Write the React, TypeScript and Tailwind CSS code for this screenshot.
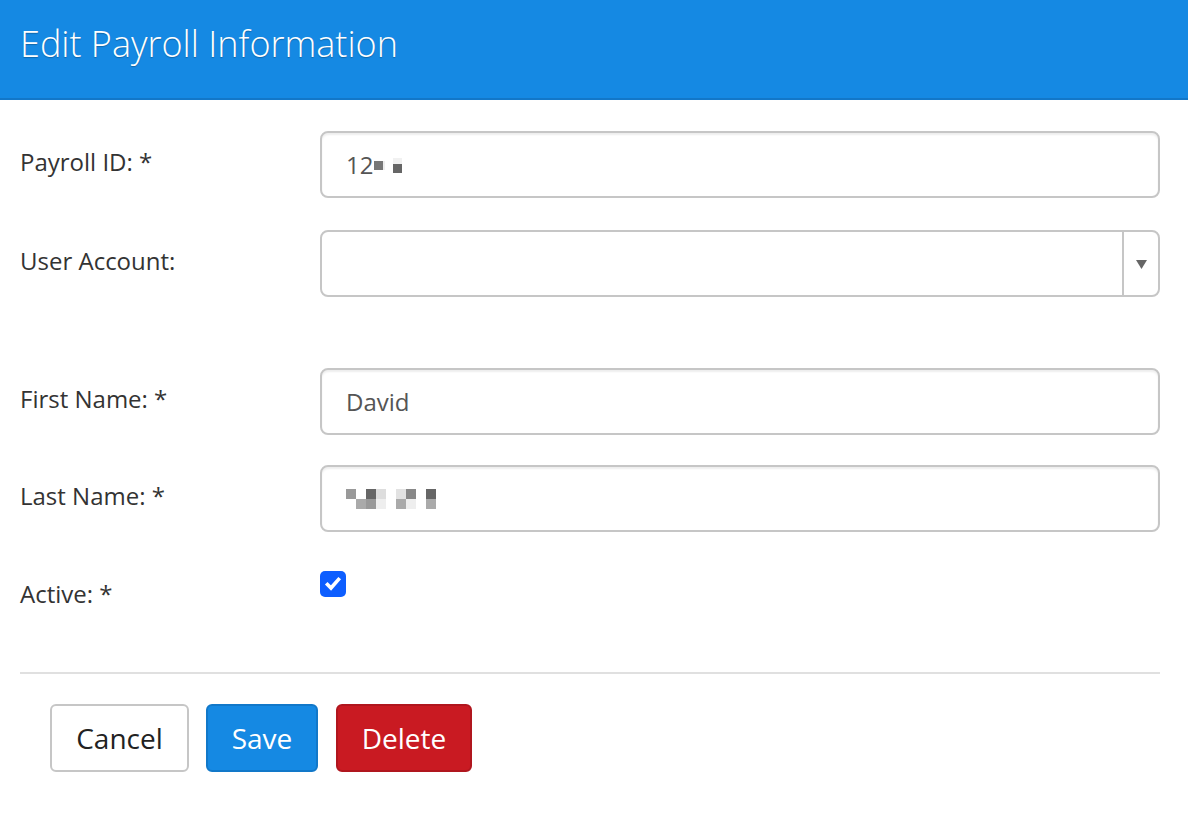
import React from "react";

const font = { fontFamily: '"Open Sans", "Noto Sans", sans-serif' };

function Px({ c, w = 9, h = 9 }: { c: string; w?: number; h?: number }) {
  return <span className="inline-block" style={{ width: w, height: h, background: c }} />;
}

function Row({ label, children, className = "" }: { label: string; children: React.ReactNode; className?: string }) {
  return (
    <div className={"flex items-center " + className}>
      <div className="w-[300px] text-[24px] text-[#333] pb-[6px]">{label}</div>
      <div className="flex-1">{children}</div>
    </div>
  );
}

function Input({ children }: { children?: React.ReactNode }) {
  return (
    <div className="h-[67px] rounded-[8px] border-2 border-[#c6c6c6] bg-white shadow-[inset_0_2px_2px_rgba(0,0,0,0.07)] flex items-center pl-[24px] text-[24px] text-[#555]">
      {children}
    </div>
  );
}

export default function App() {
  return (
    <div className="w-[1188px] h-[826px] bg-white" style={font}>
      <div className="h-[100px] bg-[#1589e3] border-b-2 border-[#1277c8] flex items-center pl-[20px]">
        <h1 className="text-[36px] font-light text-white -mt-[10px] [text-shadow:0_1px_1px_rgba(0,0,0,0.25)]">
          Edit Payroll Information
        </h1>
      </div>
      <div className="pl-[20px] pr-[28px] pt-[31px]">
        <Row label="Payroll ID: *">
          <Input>
            <span>12</span>
            <span className="flex items-center ml-[1px] mt-[2px]">
              <Px c="#777" w={9} h={9} />
              <span className="inline-block w-[2px] h-[9px] bg-[#eee]" />
              <span className="inline-block w-[8px]" />
              <span className="flex flex-col">
                <Px c="#f1f1f1" w={9} h={6} />
                <Px c="#666" w={9} h={9} />
              </span>
            </span>
          </Input>
        </Row>
        <Row label="User Account:" className="mt-[32px]">
          <div className="h-[67px] rounded-[8px] border-2 border-[#c6c6c6] bg-white flex">
            <div className="flex-1" />
            <div className="w-[36px] border-l-2 border-[#c6c6c6] flex items-center justify-center">
              <svg width="11" height="10" viewBox="0 0 11 10">
                <path d="M0 1h11L5.5 10z" fill="#666" />
              </svg>
            </div>
          </div>
        </Row>
        <Row label="First Name: *" className="mt-[71px]">
          <Input>David</Input>
        </Row>
        <Row label="Last Name: *" className="mt-[30px]">
          <Input>
            <span className="grid grid-cols-[repeat(10,10px)] grid-rows-[10px_10px]">
              <span className="bg-[#999]" />
              <span className="bg-white" />
              <span className="bg-[#666]" />
              <span className="bg-[#ddd]" />
              <span className="bg-white" />
              <span className="bg-[#e2e2e2]" />
              <span className="bg-[#888]" />
              <span className="bg-white" />
              <span className="bg-[#666]" />
              <span className="bg-white" />
              <span className="bg-white" />
              <span className="bg-[#aaa]" />
              <span className="bg-[#999]" />
              <span className="bg-[#eee]" />
              <span className="bg-white" />
              <span className="bg-[#aaa]" />
              <span className="bg-[#eee]" />
              <span className="bg-white" />
              <span className="bg-[#aaa]" />
              <span className="bg-white" />
            </span>
          </Input>
        </Row>
        <div className="flex mt-[38px] h-[48px]">
          <div className="w-[300px] text-[24px] text-[#333] pt-[6px]">Active: *</div>
          <div className="pt-[1px]">
            <div className="w-[26px] h-[26px] rounded-[5px] bg-[#0d5eff] flex items-center justify-center">
              <svg width="18" height="18" viewBox="0 0 18 18">
                <path d="M3.5 9.5l3.5 3.5L14.5 4.5" stroke="white" strokeWidth="3.6" fill="none" strokeLinecap="square" />
              </svg>
            </div>
          </div>
        </div>
        <div className="mt-[54px] border-t-2 border-[#e0e0e0]" />
        <div className="flex pl-[30px] pt-[30px]">
          <button className="h-[68px] w-[139px] rounded-[6px] border-2 border-[#c6c6c6] bg-white text-[28px] text-[#222]">
            Cancel
          </button>
          <button className="ml-[17px] h-[68px] w-[112px] rounded-[6px] border-2 border-[#1278c9] bg-[#1589e3] text-[28px] text-white">
            Save
          </button>
          <button className="ml-[18px] h-[68px] w-[136px] rounded-[6px] border-2 border-[#b0161e] bg-[#c91a22] text-[28px] text-white">
            Delete
          </button>
        </div>
      </div>
    </div>
  );
}
